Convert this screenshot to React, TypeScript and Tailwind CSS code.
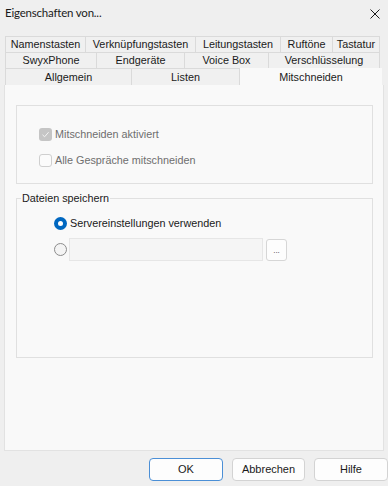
import React from 'react';

const ui = { fontFamily: '"Liberation Sans", Arial, sans-serif' };

const row1 = [
  { label: 'Namenstasten', w: 81 },
  { label: 'Verknüpfungstasten', w: 110 },
  { label: 'Leitungstasten', w: 85 },
  { label: 'Ruftöne', w: 52 },
  { label: 'Tastatur', w: 47 },
];
const row2 = [
  { label: 'SwyxPhone', w: 92 },
  { label: 'Endgeräte', w: 88 },
  { label: 'Voice Box', w: 84 },
  { label: 'Verschlüsselung', w: 111 },
];
const row3 = [
  { label: 'Allgemein', w: 127 },
  { label: 'Listen', w: 108 },
];

function TabRow({ tabs, h }: { tabs: { label: string; w: number }[]; h: string }) {
  return (
    <div className={`flex ml-[5px] ${h}`}>
      {tabs.map((t, i) => (
        <div
          key={t.label}
          className={`flex items-center justify-center border-t border-r border-[#dadada] bg-[#f0f0f0] text-[10.8px] text-[#1a1a1a] ${i === 0 ? 'border-l' : ''}`}
          style={{ width: t.w }}
        >
          {t.label}
        </div>
      ))}
    </div>
  );
}

export default function App() {
  return (
    <div className="w-[388px] h-[486px] bg-[#efefef] flex flex-col overflow-hidden" style={ui}>
      {/* title bar */}
      <div className="h-[26px] flex items-center justify-between pl-[5px] pr-[8px]">
        <span className="text-[11.5px] tracking-[-0.2px] text-[#1a1a1a]" style={{ fontFamily: 'Lato, "Noto Sans", sans-serif' }}>
          Eigenschaften von...
        </span>
        <svg width="10" height="10" viewBox="0 0 10 10" className="mt-[1px]">
          <path d="M0.5 0.5 L9.5 9.5 M9.5 0.5 L0.5 9.5" stroke="#1a1a1a" strokeWidth="1" />
        </svg>
      </div>

      {/* tabs */}
      <div className="mt-[10px]">
        <TabRow tabs={row1} h="h-[16px]" />
        <TabRow tabs={row2} h="h-[16px]" />
        <div className="flex ml-[5px] h-[17px]">
          {row3.map((t, i) => (
            <div
              key={t.label}
              className={`flex items-center justify-center border-t border-r border-[#dadada] bg-[#f0f0f0] text-[10.8px] text-[#1a1a1a] pt-[1px] ${i === 0 ? 'border-l' : ''}`}
              style={{ width: t.w }}
            >
              {t.label}
            </div>
          ))}
          <div className="w-[142px] flex justify-center bg-[#f9f9f9] text-[10.8px] text-[#1a1a1a] pt-[1px]">
            Mitschneiden
          </div>
        </div>
      </div>

      {/* panel */}
      <div className="ml-[4px] w-[380px] h-[366px] bg-[#f9f9f9] border-l border-r border-b border-[#e2e2e2] pl-[11px]">
        <div className="mt-[20px] w-[357px] h-[79px] border border-[#e0e0e0] pl-[22px] pt-[22px] flex flex-col gap-[13px]">
          <div className="flex items-center gap-[3px] h-[13px]">
            <div className="w-[13px] h-[13px] rounded-[3px] bg-[#c5c5c5] flex items-center justify-center">
              <svg width="9" height="9" viewBox="0 0 9 9">
                <path d="M1.5 4.8 L3.6 6.8 L7.6 2.2" fill="none" stroke="#f4f4f4" strokeWidth="1" />
              </svg>
            </div>
            <span className="text-[10.8px] text-[#6e6e6e]">Mitschneiden aktiviert</span>
          </div>
          <div className="flex items-center gap-[3px] h-[13px]">
            <div className="w-[13px] h-[13px] rounded-[3px] border border-[#cfcfcf] bg-[#fbfbfb]" />
            <span className="text-[10.8px] text-[#6e6e6e]">Alle Gespräche mitschneiden</span>
          </div>
        </div>

        <div className="relative mt-[14px] w-[357px] h-[160px] border border-[#e0e0e0] pl-[37px] pt-[18px]">
          <span className="absolute -top-[8px] left-[4px] px-[1px] bg-[#f9f9f9] text-[10.8px] text-[#1a1a1a] leading-[14px]">
            Dateien speichern
          </span>
          <div className="flex items-center gap-[3px] h-[13px]">
            <div className="w-[13px] h-[13px] rounded-full bg-[#0067c0] flex items-center justify-center">
              <div className="w-[5px] h-[5px] rounded-full bg-white" />
            </div>
            <span className="text-[10.8px] text-[#1a1a1a]">Servereinstellungen verwenden</span>
          </div>
          <div className="flex items-center mt-[8px] h-[23px]">
            <div className="w-[13px] h-[13px] rounded-full border border-[#8c8c8c] bg-[#f4f4f4]" />
            <div className="ml-[2px] w-[194px] h-[23px] border border-[#e6e6e6] bg-[#f5f5f5]" />
            <div className="ml-[3px] w-[21px] h-[22px] border border-[#d6d6d6] rounded-[3px] bg-[#fdfdfd] flex items-center justify-center text-[8px] text-[#333] pt-[3px]">
              ...
            </div>
          </div>
        </div>
      </div>

      {/* buttons */}
      <div className="mt-[7px] flex gap-[9px] pl-[149px]">
        <button className="w-[74px] h-[23px] rounded-[4px] border border-[#4b8fd6] bg-[#fdfdfd] text-[11px] text-[#1a1a1a]">
          OK
        </button>
        <button className="w-[73px] h-[23px] rounded-[4px] border border-[#d3d3d3] bg-[#fdfdfd] text-[11px] text-[#1a1a1a]">
          Abbrechen
        </button>
        <button className="w-[74px] h-[23px] rounded-[4px] border border-[#d3d3d3] bg-[#fdfdfd] text-[11px] text-[#1a1a1a]">
          Hilfe
        </button>
      </div>
    </div>
  );
}
